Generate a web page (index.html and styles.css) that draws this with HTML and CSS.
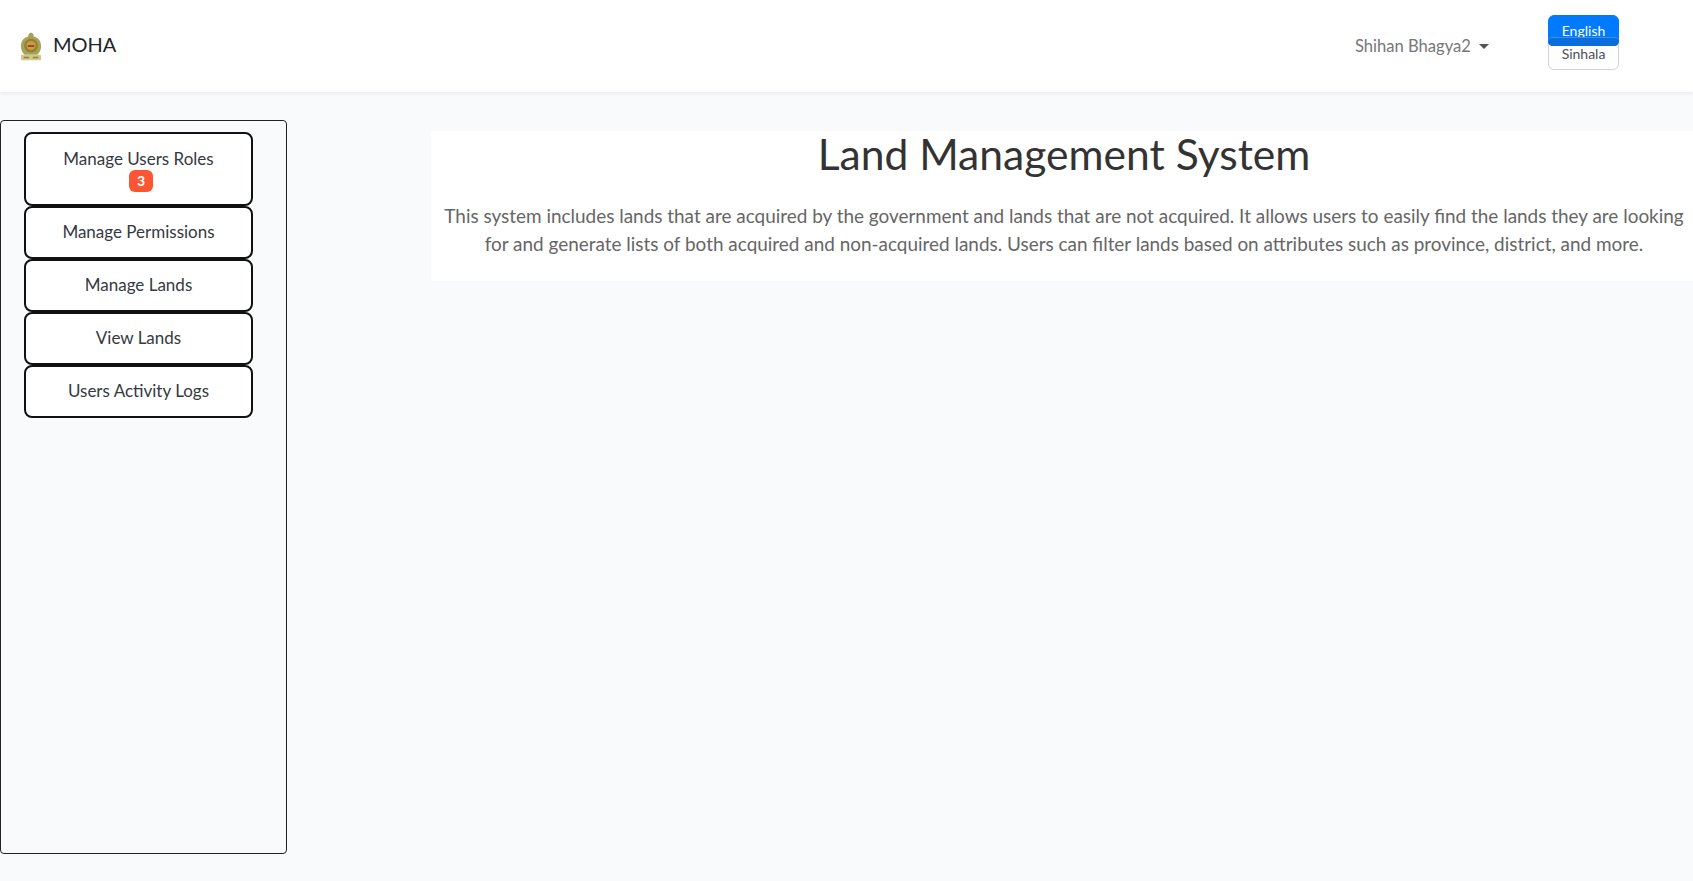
FILE: index.html
```html
<!DOCTYPE html>
<html lang="en">
<head>
    <meta charset="UTF-8">
    <title>MOHA</title>
    <link rel="stylesheet" href="styles.css">
</head>
<body>
<nav class="navbar">
    <a class="brand">
        <svg class="brand-logo" width="22" height="29" viewBox="0 0 24 30">
            <path d="M12 0c2 0 3 2 3 4 5 1 8 5 8 11 0 4-2 7-4 9H5c-2-2-4-5-4-9 0-6 3-10 8-11 0-2 1-4 3-4z" fill="#a8a257"/>
            <circle cx="12" cy="14" r="7.5" fill="#8f8238"/>
            <circle cx="12" cy="14" r="5" fill="#cf9a3c"/>
            <path d="M8.5 13.5h7v2h-7z" fill="#8c4a24"/>
            <rect x="1" y="24" width="22" height="6" rx="1" fill="#d0c88c"/>
            <path d="M4 27h6M14 27h6" stroke="#8a8340" stroke-width="1.5"/>
        </svg>
        <span class="brand-name">MOHA</span>
    </a>
    <div class="user-menu">
        Shihan Bhagya2
        <span class="caret"></span>
    </div>
    <div class="lang-group">
        <button class="lang-btn lang-active">English</button>
        <button class="lang-btn lang-other">Sinhala</button>
    </div>
</nav>
<div class="main">
    <aside class="sidebar">
        <a class="side-btn side-btn-tall">
            Manage Users Roles
            <span class="badge">3</span>
        </a>
        <a class="side-btn">Manage Permissions</a>
        <a class="side-btn">Manage Lands</a>
        <a class="side-btn">View Lands</a>
        <a class="side-btn">Users Activity Logs</a>
    </aside>
    <section class="intro">
        <h1>Land Management System</h1>
        <p>This system includes lands that are acquired by the government and lands that are not acquired. It allows users to easily find the lands they are looking for and generate lists of both acquired and non-acquired lands. Users can filter lands based on attributes such as province, district, and more.</p>
    </section>
</div>
</body>
</html>
```

FILE: styles.css
```css
html, body {
    height: 100%;
}

body {
    margin: 0;
    background: #f8fafc;
    color: #212529;
    font-family: Lato, "Open Sans", sans-serif;
    font-size: 16px;
    overflow: hidden;
}

.navbar {
    height: 92px;
    box-sizing: border-box;
    background: #fff;
    box-shadow: 0 2px 4px rgba(0, 0, 0, 0.06);
    display: flex;
    align-items: center;
    padding: 0 74px 0 20px;
}

.brand {
    display: flex;
    align-items: center;
    gap: 11px;
    font-size: 20px;
    color: #212529;
    margin-right: auto;
}

.brand-name {
    margin-bottom: 5px;
}

.user-menu {
    display: flex;
    align-items: center;
    gap: 8px;
    font-size: 16.6px;
    color: #777;
    margin-right: 59px;
}

.caret {
    border-top: 5px solid #555;
    border-left: 5px solid transparent;
    border-right: 5px solid transparent;
}

.lang-group {
    width: 71px;
    margin-top: -7px;
    display: flex;
    flex-direction: column;
}

.lang-btn {
    padding: 0;
    border: 1px solid #ced4da;
    border-radius: 6px;
    background: #fff;
    color: #495057;
    font-family: inherit;
    font-size: 14px;
    line-height: 1;
}

.lang-active {
    height: 31px;
    position: relative;
    z-index: 1;
    border-color: #007bff;
    background: #007bff;
    color: #fff;
}

.lang-active::after {
    content: "";
    position: absolute;
    left: -1px;
    right: -1px;
    bottom: -1px;
    height: 9px;
    box-sizing: border-box;
    border-top: 1px solid #3f8fe6;
    border-radius: 6px;
    background: #0a6ddb;
}

.lang-other {
    height: 33px;
    margin-top: -9px;
}

.main {
    display: flex;
    align-items: flex-start;
    padding-top: 28px;
}

.sidebar {
    width: 287px;
    height: 734px;
    box-sizing: border-box;
    border: 1px solid #222;
    border-radius: 4px;
    padding: 11px 33px 0 23px;
    display: flex;
    flex-direction: column;
    flex-shrink: 0;
}

.side-btn {
    height: 53px;
    box-sizing: border-box;
    border: 2px solid #111;
    border-radius: 8px;
    padding-bottom: 2px;
    background: #fff;
    color: #343a40;
    font-size: 17px;
    display: flex;
    flex-direction: column;
    align-items: center;
    justify-content: center;
}

.side-btn-tall {
    height: 74px;
    padding: 2px 0 0;
}

.badge {
    margin: 1px 0 0 5px;
    padding: 0 8px;
    height: 22px;
    line-height: 22px;
    border-radius: 6px;
    background: #fb5533;
    color: #fff;
    font-size: 14px;
    font-weight: 700;
}

.intro {
    margin: 11px -2px 0 144px;
    flex: 1;
    height: 150px;
    box-sizing: border-box;
    background: #fff;
    text-align: center;
    padding: 0 10px 0 12px;
    min-width: 0;
}

.intro h1 {
    margin: -1px 0 24px;
    font-size: 42.6px;
    line-height: 48px;
    font-weight: 400;
    color: #333;
}

.intro p {
    margin: 0;
    font-size: 18.93px;
    line-height: 27.5px;
    color: #666;
}
```
